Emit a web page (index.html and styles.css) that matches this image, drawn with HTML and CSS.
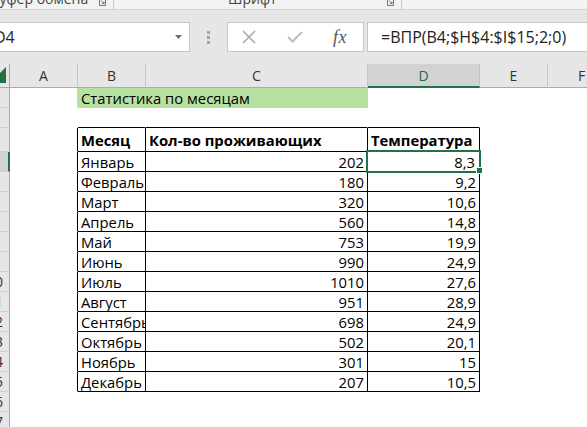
FILE: index.html
```html
<!DOCTYPE html>
<html lang="ru">
<head>
<meta charset="utf-8">
<title>Excel — Статистика по месяцам</title>
<link rel="stylesheet" href="styles.css">
</head>
<body>
<div class="app">
  <div class="ribbon">
    <div class="rb-group first">
      <span class="rb-label clip">Буфер обмена</span>
      <svg class="launcher" width="8" height="6" viewBox="0 0 8 6"><path d="M0.5 0 V5.5 H6.5 V0" fill="none" stroke="#777" stroke-width="1"/><path d="M2 0.5 L5 3.5 M5 1.5 V3.5 H3" fill="none" stroke="#777" stroke-width="1"/></svg>
    </div>
    <div class="rb-group second">
      <span class="rb-label font">Шрифт</span>
      <svg class="launcher" width="8" height="6" viewBox="0 0 8 6"><path d="M0.5 0 V5.5 H6.5 V0" fill="none" stroke="#777" stroke-width="1"/><path d="M2 0.5 L5 3.5 M5 1.5 V3.5 H3" fill="none" stroke="#777" stroke-width="1"/></svg>
    </div>
  </div>

  <div class="fbar">
    <div class="namebox">
      <span class="nb-text">D4</span>
      <svg class="nb-arrow" width="7" height="4" viewBox="0 0 7 4"><path d="M0 0 H7 L3.5 4 Z" fill="#6b6b6b"/></svg>
    </div>
    <div class="grip"><i></i><i></i><i></i></div>
    <div class="fxbox">
      <svg class="ic-x" width="14" height="14" viewBox="0 0 14 14"><path d="M1 1 L13 13 M13 1 L1 13" stroke="#a9a9a9" stroke-width="1.6" fill="none"/></svg>
      <svg class="ic-ok" width="16" height="12" viewBox="0 0 16 12"><path d="M1 6 L5.5 10.5 L15 1" stroke="#bdbdbd" stroke-width="2" fill="none"/></svg>
      <span class="fx">fx</span>
    </div>
    <div class="formula">=ВПР(B4;$H$4:$I$15;2;0)</div>
  </div>

  <div class="sheet">
    <!-- column headers -->
    <div class="corner"><span></span></div>
    <div class="ch">A</div>
    <div class="ch">B</div>
    <div class="ch">C</div>
    <div class="ch sel">D</div>
    <div class="ch">E</div>
    <div class="ch">F</div>

    <!-- row 1 -->
    <div class="rh"><span>1</span></div>
    <div class="c ga"></div>
    <div class="c g">Статистика по месяцам</div>
    <div class="c"></div><div class="c"></div><div class="c"></div>

    <!-- row 2 -->
    <div class="rh"><span>2</span></div>
    <div class="c"></div>
    <div class="c top"></div><div class="c top"></div><div class="c top"></div>
    <div class="c"></div><div class="c"></div>

    <!-- row 3 -->
    <div class="rh"><span>3</span></div>
    <div class="c tl"></div>
    <div class="c t b">Месяц</div>
    <div class="c t b">Кол-во проживающих</div>
    <div class="c t b">Температура</div>
    <div class="c"></div><div class="c"></div>

    <!-- row 4 -->
    <div class="rh sel"><span>4</span></div>
    <div class="c tl"></div>
    <div class="c t">Январь</div><div class="c t num">202</div><div class="c t num active">8,3</div>
    <div class="c"></div><div class="c"></div>

    <div class="rh"><span>5</span></div>
    <div class="c tl"></div>
    <div class="c t">Февраль</div><div class="c t num">180</div><div class="c t num">9,2</div>
    <div class="c"></div><div class="c"></div>

    <div class="rh"><span>6</span></div>
    <div class="c tl"></div>
    <div class="c t">Март</div><div class="c t num">320</div><div class="c t num">10,6</div>
    <div class="c"></div><div class="c"></div>

    <div class="rh"><span>7</span></div>
    <div class="c tl"></div>
    <div class="c t">Апрель</div><div class="c t num">560</div><div class="c t num">14,8</div>
    <div class="c"></div><div class="c"></div>

    <div class="rh"><span>8</span></div>
    <div class="c tl"></div>
    <div class="c t">Май</div><div class="c t num">753</div><div class="c t num">19,9</div>
    <div class="c"></div><div class="c"></div>

    <div class="rh"><span>9</span></div>
    <div class="c tl"></div>
    <div class="c t">Июнь</div><div class="c t num">990</div><div class="c t num">24,9</div>
    <div class="c"></div><div class="c"></div>

    <div class="rh"><span>10</span></div>
    <div class="c tl"></div>
    <div class="c t">Июль</div><div class="c t num">1010</div><div class="c t num">27,6</div>
    <div class="c"></div><div class="c"></div>

    <div class="rh blue"><span>11</span></div>
    <div class="c tl"></div>
    <div class="c t">Август</div><div class="c t num">951</div><div class="c t num">28,9</div>
    <div class="c"></div><div class="c"></div>

    <div class="rh"><span>12</span></div>
    <div class="c tl"></div>
    <div class="c t">Сентябрь</div><div class="c t num">698</div><div class="c t num">24,9</div>
    <div class="c"></div><div class="c"></div>

    <div class="rh"><span>13</span></div>
    <div class="c tl"></div>
    <div class="c t">Октябрь</div><div class="c t num">502</div><div class="c t num">20,1</div>
    <div class="c"></div><div class="c"></div>

    <div class="rh"><span>14</span></div>
    <div class="c tl"></div>
    <div class="c t">Ноябрь</div><div class="c t num">301</div><div class="c t num">15</div>
    <div class="c"></div><div class="c"></div>

    <div class="rh"><span>15</span></div>
    <div class="c tl"></div>
    <div class="c t">Декабрь</div><div class="c t num">207</div><div class="c t num">10,5</div>
    <div class="c"></div><div class="c"></div>

    <div class="rh"><span>16</span></div>
    <div class="c"></div><div class="c"></div><div class="c"></div><div class="c"></div><div class="c"></div><div class="c"></div>

    <div class="rh"><span>17</span></div>
    <div class="c"></div><div class="c"></div><div class="c"></div><div class="c"></div><div class="c"></div><div class="c"></div>
  </div>
</div>
</body>
</html>
```

FILE: styles.css
```css
html, body {
  margin: 0;
  padding: 0;
  background: #fff;
  overflow: hidden;
}

body {
  font-family: "Open Sans", "Noto Sans", sans-serif;
  color: #000;
}

.app {
  width: 587px;
  height: 427px;
  overflow: hidden;
  background: #fff;
}

/* ---------- ribbon remnant ---------- */
.ribbon {
  height: 10px;
  box-sizing: border-box;
  background: #f3f3f3;
  border-bottom: 1px solid #d4d4d4;
  display: flex;
}

.rb-group {
  height: 9px;
  box-sizing: border-box;
  display: flex;
  align-items: flex-end;
  border-right: 1px solid #c8c8c8;
  flex: none;
}

.rb-group.first { width: 114px; }
.rb-group.second { width: 288px; }

.rb-label {
  font-size: 14px;
  line-height: 14px;
  color: #444;
  white-space: nowrap;
  margin-bottom: 3px;
  flex: none;
}

.rb-label.clip { margin-left: -9px; }
.rb-label.font { margin-left: 114px; }

.launcher {
  margin-left: auto;
  margin-right: 6px;
  margin-bottom: 3px;
  flex: none;
}

/* ---------- formula bar ---------- */
.fbar {
  height: 54px;
  background: #e6e6e6;
  display: flex;
  align-items: center;
}

.namebox {
  margin-left: -1px;
  width: 191px;
  height: 30px;
  box-sizing: border-box;
  background: #fff;
  border: 1px solid #c6c6c6;
  display: flex;
  align-items: center;
  flex: none;
}

.nb-text {
  margin-left: -6px;
  font-size: 16px;
  color: #222;
}

.nb-arrow {
  margin-left: auto;
  margin-right: 7px;
}

.grip {
  margin-left: 17px;
  display: flex;
  flex-direction: column;
  gap: 2px;
  flex: none;
}

.grip i {
  display: block;
  width: 3px;
  height: 3px;
  background: #a4a4a4;
}

.fxbox {
  margin-left: 17px;
  width: 137px;
  height: 30px;
  box-sizing: border-box;
  background: #fff;
  border: 1px solid #c6c6c6;
  display: flex;
  align-items: center;
  flex: none;
}

.ic-x { margin-left: 14px; flex: none; }
.ic-ok { margin-left: 31px; flex: none; }

.fx {
  margin-left: 30px;
  font-family: "Liberation Serif", "DejaVu Serif", serif;
  font-style: italic;
  font-size: 18px;
  color: #555;
  letter-spacing: 0.5px;
}

.formula {
  margin-left: 3px;
  margin-right: -2px;
  flex: 1;
  height: 30px;
  box-sizing: border-box;
  background: #fff;
  border: 1px solid #c6c6c6;
  padding-left: 13px;
  display: flex;
  align-items: center;
  font-size: 16px;
  color: #222;
  white-space: nowrap;
}

/* ---------- sheet grid ---------- */
.sheet {
  display: grid;
  grid-template-columns: 10px 68px 68px 222px 112px 68px 68px;
  grid-template-rows: 24px 20px 20px 24px repeat(12, 20px) 20px 20px;
  width: 616px;
}

.corner {
  box-sizing: border-box;
  background: #e6e6e6;
  border-right: 1px solid #ababab;
  border-bottom: 1px solid #ababab;
  display: flex;
  justify-content: flex-end;
  align-items: flex-end;
  padding: 0 3px 4px 0;
}

.corner span {
  flex: none;
  width: 16px;
  height: 16px;
  background: #217346;
  clip-path: polygon(100% 0, 100% 100%, 0 100%);
}

.ch {
  box-sizing: border-box;
  background: #e6e6e6;
  border-right: 1px solid #c4c4c4;
  border-bottom: 1px solid #ababab;
  display: flex;
  align-items: center;
  justify-content: center;
  font-size: 14px;
  color: #333;
}

.ch.sel {
  background: #d2d2d2;
  border-bottom: 2px solid #217346;
  color: #1f6b43;
}

.rh {
  box-sizing: border-box;
  background: #e6e6e6;
  border-right: 1px solid #ababab;
  border-bottom: 1px solid #cfcfcf;
  display: flex;
  align-items: center;
  font-size: 14px;
  color: #333;
}

.rh span {
  display: block;
  flex: none;
  width: 30px;
  margin-left: -20px;
  text-align: center;
}

.rh.sel {
  background: #d2d2d2;
  border-right: 2px solid #217346;
}

.rh.blue { color: #4aa6e6; }

.c {
  box-sizing: border-box;
  border-right: 1px solid #fff;
  border-bottom: 1px solid #fff;
  display: flex;
  align-items: flex-end;
  padding: 0 3px;
  font-size: 14.8px;
  line-height: 18px;
  white-space: nowrap;
  overflow: hidden;
  color: #000;
}

.c.ga { border-right-color: #b7e1a1; }

.c.g {
  grid-column: span 2;
  background: #b7e1a1;
  border-right-color: #b7e1a1;
  border-bottom-color: #b7e1a1;
}

.c.top { border-bottom-color: #000; }
.c.tl { border-right-color: #000; }

.c.t {
  border-right-color: #000;
  border-bottom-color: #000;
}

.c.b {
  font-weight: 700;
  padding-bottom: 2px;
}

.c.num {
  justify-content: flex-end;
  padding-right: 3px;
}

.c.active {
  position: relative;
  overflow: visible;
  padding-right: 4px;
}

.c.active::after {
  content: "";
  position: absolute;
  inset: -2px;
  border: 2px solid #217346;
}

.c.active::before {
  content: "";
  position: absolute;
  right: -4px;
  bottom: -3px;
  width: 5px;
  height: 5px;
  background: #217346;
  border: 1px solid #fff;
  z-index: 1;
}
```
